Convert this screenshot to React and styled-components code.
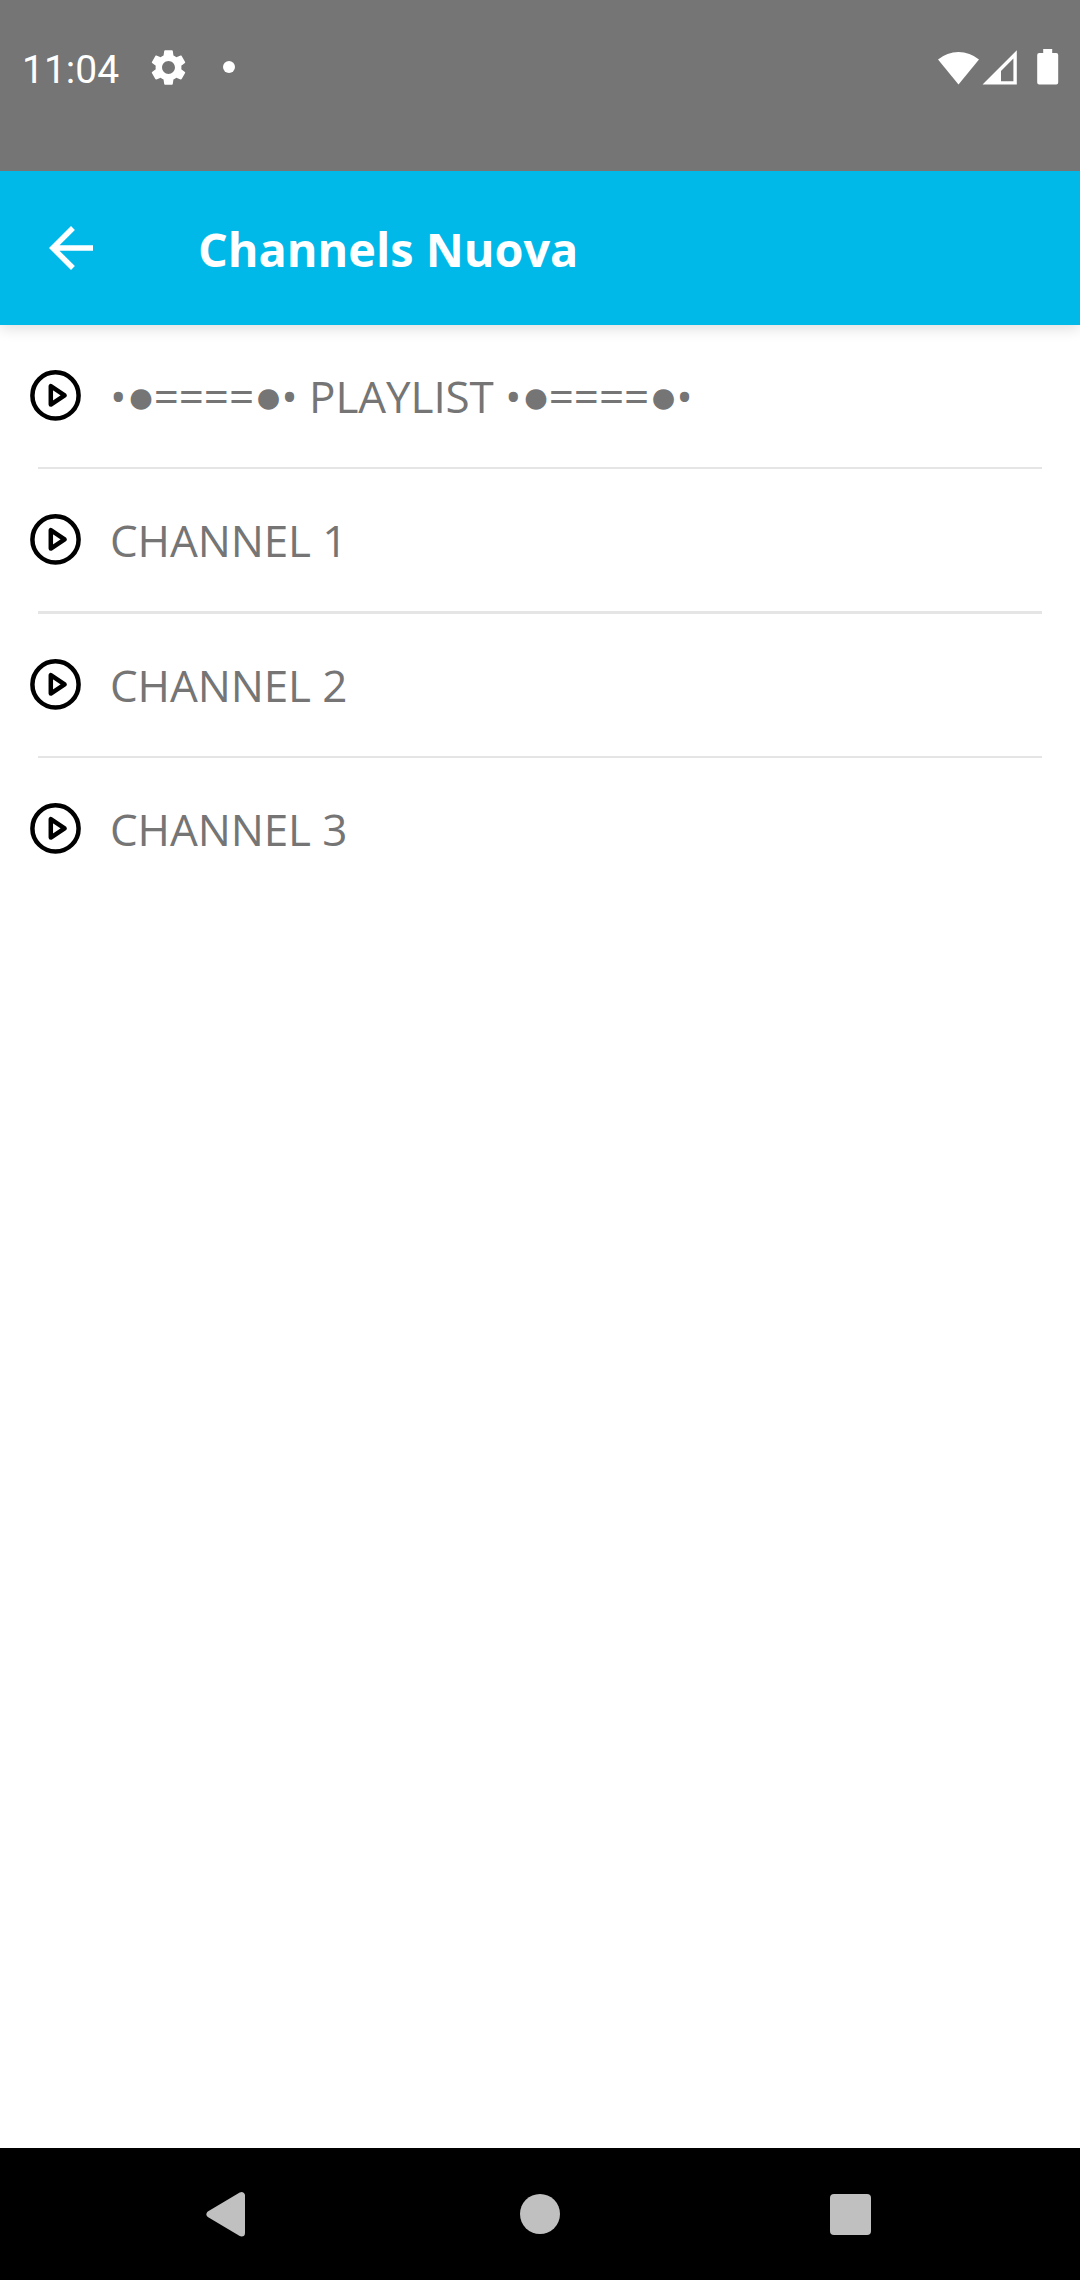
import React from 'react';
import styled, { createGlobalStyle } from 'styled-components';

const channels = [
    { name: '•●====●• PLAYLIST •●====●•', line: 2 },
    { name: 'CHANNEL 1', line: 3 },
    { name: 'CHANNEL 2', line: 2 },
    { name: 'CHANNEL 3', line: 0 },
]

export default function App() {
    return (
        <Screen>
            <GlobalStyle />
            <StatusBar>
                <StatusGroup>
                    <Clock>11:04</Clock>
                    <GearIcon />
                    <Dot />
                </StatusGroup>
                <SignalIcons />
            </StatusBar>
            <Header>
                <BackButton aria-label="Back">
                    <svg width="66" height="66" viewBox="0 0 24 24" fill="#fff">
                        <path d="M20 11H7.83l5.59-5.59L12 4l-8 8 8 8 1.41-1.41L7.83 13H20v-2z" />
                    </svg>
                </BackButton>
                <Title>Channels Nuova</Title>
            </Header>
            <List>
                {channels.map(({ name, line }) => (
                    <li key={name}>
                        <Row>
                            <PlayIcon />
                            <Name>
                                {name.split(/(●)/).map((part, i) => (
                                    part === '●' ? <Disc key={i}>●</Disc> : part
                                ))}
                            </Name>
                        </Row>
                        {line > 0 && <Divider $size={line} />}
                    </li>
                ))}
            </List>
            <NavBar>
                <NavButton aria-label="Back">
                    <svg width="40" height="46" viewBox="0 0 40 46">
                        <path d="M4 23.3 L35.5 4.6 V42 Z" fill="#c0c0c0" stroke="#c0c0c0" strokeWidth="7" strokeLinejoin="round" />
                    </svg>
                </NavButton>
                <NavButton aria-label="Home">
                    <Circle />
                </NavButton>
                <NavButton aria-label="Recent">
                    <Square />
                </NavButton>
            </NavBar>
        </Screen>
    )
}

function GearIcon() {
    return (
        <Gear viewBox="0 0 24 24" fill="#fff">
            <path d="M19.14 12.94c.04-.3.06-.61.06-.94 0-.32-.02-.64-.07-.94l2.03-1.58c.18-.14.23-.41.12-.61l-1.92-3.32c-.12-.22-.37-.29-.59-.22l-2.39.96c-.5-.38-1.03-.7-1.62-.94l-.36-2.54c-.04-.24-.24-.41-.48-.41h-3.84c-.24 0-.43.17-.47.41l-.36 2.54c-.59.24-1.13.57-1.62.94l-2.39-.96c-.22-.08-.47 0-.59.22L2.74 8.87c-.12.21-.08.47.12.61l2.03 1.58c-.05.3-.09.63-.09.94s.02.64.07.94l-2.03 1.58c-.18.14-.23.41-.12.61l1.92 3.32c.12.22.37.29.59.22l2.39-.96c.5.38 1.03.7 1.62.94l.36 2.54c.05.24.24.41.48.41h3.84c.24 0 .44-.17.47-.41l.36-2.54c.59-.24 1.13-.56 1.62-.94l2.39.96c.22.08.47 0 .59-.22l1.92-3.32c.12-.22.07-.47-.12-.61l-2.01-1.58zM12 15.6c-1.98 0-3.6-1.62-3.6-3.6s1.62-3.6 3.6-3.6 3.6 1.62 3.6 3.6-1.62 3.6-3.6 3.6z" />
        </Gear>
    )
}

// wifi, mobile signal, battery
function SignalIcons() {
    return (
        <Signals viewBox="0 0 122 36" fill="#fff">
            <path d="M20.5 35.5 L0 10.4 A32.4 32.4 0 0 1 41 10.4 Z" />
            <path fillRule="evenodd" d="M44.5 35.5 L78.8 1.2 V35.5 Z M63 32.3 H75.4 V9.6 L63 22 Z" />
            <path d="M105.2 0 h9 v4 h4 q2 0 2 2 v27.5 q0 2 -2 2 h-17 q-2 0 -2 -2 v-27.5 q0 -2 2 -2 h4 Z" />
        </Signals>
    )
}

function PlayIcon() {
    return (
        <Play viewBox="0 0 51 51" fill="none" stroke="#000" strokeWidth="4.5" strokeLinejoin="round">
            <circle cx="25.5" cy="25.4" r="23.1" />
            <path d="M20.8 16.2 V34.6 L34.6 25.4 Z" />
        </Play>
    )
}

const GlobalStyle = createGlobalStyle`
    body {
        margin: 0;
        background: #fff;
    }
    * {
        box-sizing: border-box;
    }
`

const Screen = styled.div`
    display: flex;
    flex-direction: column;
    width: 1080px;
    height: 2280px;
    overflow: hidden;
    background: #fff;
    font-family: 'Open Sans', 'Noto Sans', sans-serif;
`

const StatusBar = styled.div`
    display: flex;
    align-items: flex-start;
    justify-content: space-between;
    height: 171px;
    padding: 46px 20px 0 22px;
    background: #757575;
    z-index: 2;
`

const StatusGroup = styled.div`
    display: flex;
    align-items: center;
    height: 42px;
`

const Clock = styled.span`
    width: 125px;
    font-family: Roboto, sans-serif;
    font-size: 39px;
    line-height: 46px;
    padding-top: 6px;
    color: #fff;
`

const Gear = styled.svg`
    width: 43px;
    height: 43px;
`

const Dot = styled.span`
    width: 12px;
    height: 12px;
    margin-left: 33px;
    border-radius: 50%;
    background: #fff;
`

const Signals = styled.svg`
    width: 122px;
    height: 36px;
    margin-top: 3px;
`

const Header = styled.header`
    display: flex;
    align-items: center;
    height: 154px;
    padding-left: 38px;
    background: #00b9e8;
    box-shadow: 0 3px 14px rgba(0, 0, 0, 0.14);
    z-index: 1;
`

const BackButton = styled.button`
    display: flex;
    width: 160px;
    padding: 0;
    border: 0;
    background: none;
`

const Title = styled.h1`
    margin: 0;
    padding-top: 1px;
    font-size: 46.8px;
    font-weight: bold;
    line-height: 64px;
    white-space: nowrap;
    color: #fff;
`

const List = styled.ul`
    flex: 1;
    margin: 0;
    padding: 0;
    list-style: none;
`

const Row = styled.div`
    display: flex;
    align-items: flex-start;
    height: 142px;
    padding: 45px 30px 0;
`

const Play = styled.svg`
    flex: none;
    width: 51px;
    height: 51px;
`

const Name = styled.span`
    margin-left: 29px;
    font-size: 44px;
    line-height: 52px;
    letter-spacing: -0.1px;
    white-space: pre;
    color: #757575;
`

const Disc = styled.span`
    display: inline-block;
    width: 27.3px;
    font-size: 48px;
    line-height: 40px;
    text-align: center;
`

const Divider = styled.div`
    height: ${props => props.$size}px;
    margin: 0 38px;
    background: #e5e5e5;
`

const NavBar = styled.nav`
    display: grid;
    grid-template-columns: 314px 310px auto;
    align-items: center;
    height: 132px;
    padding-left: 206px;
    background: #000;
`

const NavButton = styled.button`
    display: flex;
    align-items: center;
    padding: 0;
    border: 0;
    background: none;
`

const Circle = styled.span`
    width: 40px;
    height: 40px;
    border-radius: 50%;
    background: #c0c0c0;
`

const Square = styled.span`
    width: 41px;
    height: 41px;
    border-radius: 4px;
    background: #c0c0c0;
`
